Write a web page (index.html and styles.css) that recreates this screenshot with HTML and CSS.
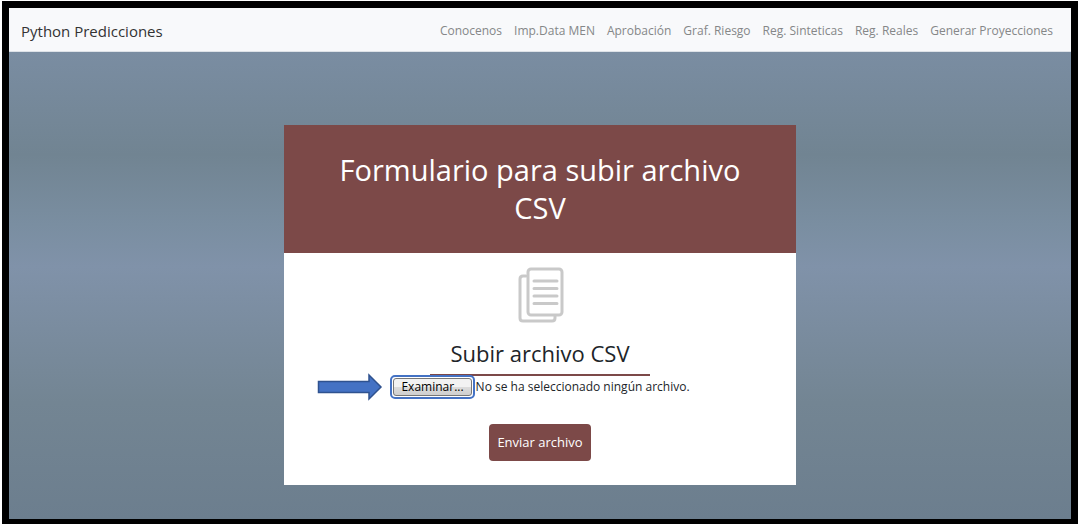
FILE: index.html
```html
<!DOCTYPE html>
<html lang="es">
<head>
<meta charset="utf-8">
<meta name="viewport" content="width=device-width, initial-scale=1">
<title>Python Predicciones</title>
<link rel="stylesheet" href="styles.css">
</head>
<body>
<div class="frame">
  <header class="navbar">
    <a class="brand" href="#">Python Predicciones</a>
    <nav class="menu">
      <a href="#">Conocenos</a>
      <a href="#">Imp.Data MEN</a>
      <a href="#">Aprobación</a>
      <a href="#">Graf. Riesgo</a>
      <a href="#">Reg. Sinteticas</a>
      <a href="#">Reg. Reales</a>
      <a href="#">Generar Proyecciones</a>
    </nav>
  </header>
  <main class="content">
    <form class="card">
      <h1 class="card-title">Formulario para subir archivo CSV</h1>
      <div class="card-body">
        <svg class="icon" width="48" height="56" viewBox="0 0 48 56" fill="none" stroke="#c9c9c9" stroke-width="3" stroke-linejoin="round" stroke-linecap="round" aria-hidden="true">
          <path d="M10 9H7q-3 0-3 3V51q0 3 3 3H36q3 0 3-3V49"/>
          <rect x="12" y="2" width="34" height="46" rx="3"/>
          <path d="M18 14H41M18 21.500H41M18 29H41M18 36.500H41"/>
        </svg>
        <h2 class="subtitle">Subir archivo CSV</h2>
        <div class="picker">
          <svg class="arrow" width="66" height="28" viewBox="0 0 66 28" aria-hidden="true">
            <path d="M1.500 8.500H52V2L64 14L52 26V19.500H1.500Z" fill="#4472c4" stroke="#2f528f" stroke-width="1.500"/>
          </svg>
          <input class="file" type="file" id="csv" accept=".csv">
          <label class="browse" for="csv"><span class="browse-face">Examinar...</span></label>
          <span class="status">No se ha seleccionado ningún archivo.</span>
        </div>
        <button class="submit" type="submit">Enviar archivo</button>
      </div>
    </form>
  </main>
</div>
</body>
</html>
```
FILE: styles.css
```css
* {
  box-sizing: border-box;
}

body {
  margin: 0;
  padding: 1px 0 0 2px;
  background: #fff;
  color: #212529;
  font-family: "Open Sans", "Noto Sans", sans-serif;
}

.frame {
  display: flex;
  flex-direction: column;
  min-height: calc(100vh - 1px);
  border: 7px solid #000;
  border-bottom-width: 5px;
}

.navbar {
  display: flex;
  align-items: center;
  justify-content: space-between;
  padding: 11px 12px 8px;
  border-bottom: 1px solid #dde2e8;
  background: #f8f9fb;
}

.brand {
  color: #333;
  font-size: 15px;
  line-height: 24px;
  text-decoration: none;
}

.menu {
  display: flex;
  gap: 12px;
  padding-right: 6px;
}

.menu a {
  color: #858788;
  font-size: 12px;
  line-height: 24px;
  text-decoration: none;
  white-space: nowrap;
}

.content {
  flex: 1;
  padding: 73px 16px 34px;
  background: linear-gradient(#7a8da2 0, #718492 22%, #7a8ea1 37%, #8092a9 46%, #738593 75%, #6c7e8e 100%);
}

.card {
  max-width: 512px;
  margin: 0 auto;
  background: #fff;
}

.card-title {
  margin: 0;
  padding: 26px 40px;
  background: #7c4948;
  color: #fff;
  font-size: 29px;
  font-weight: 400;
  line-height: 38px;
  text-align: center;
}

.card-body {
  display: flex;
  flex-direction: column;
  align-items: center;
  padding: 14px 16px 24px;
}

.icon {
  display: block;
}

.subtitle {
  width: 220px;
  margin: 16px 0 0;
  padding-bottom: 7px;
  border-bottom: 2px solid #7c4948;
  font-size: 22px;
  font-weight: 400;
  line-height: 28px;
  text-align: center;
}

.picker {
  position: relative;
  display: flex;
  align-items: center;
  gap: 1px;
  margin-top: -1px;
}

.arrow {
  position: absolute;
  right: 100%;
  margin-right: 7px;
}

.file {
  position: absolute;
  width: 1px;
  height: 1px;
  opacity: 0;
}

.browse {
  padding: 1px;
  border: 2px solid #4472c4;
  border-radius: 5px;
  background: #fff;
  cursor: pointer;
}

.browse-face {
  display: block;
  padding: 0 7px;
  border: 1px solid #777;
  border-radius: 3px;
  background: linear-gradient(#f2f2f2 50%, #dcdcdc 50%, #cfcfcf);
  color: #000;
  font-size: 12px;
  line-height: 16px;
}

.status {
  font-size: 12px;
  line-height: 16px;
}

.submit {
  margin-top: 25px;
  padding: 8px;
  border: 0;
  border-radius: 4px;
  background: #7c4948;
  color: #fff;
  font-family: inherit;
  font-size: 13px;
  line-height: 21px;
  cursor: pointer;
}
```
